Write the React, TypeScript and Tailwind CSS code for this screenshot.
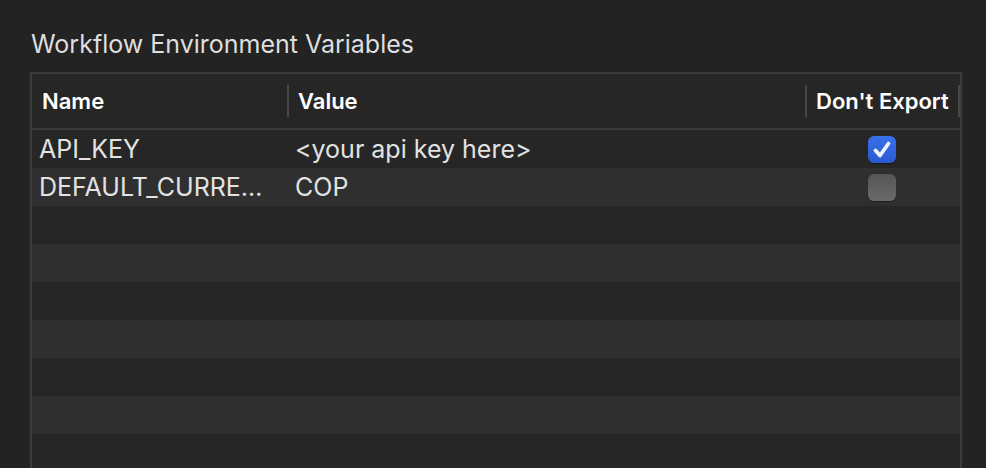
type EnvVar = { name: string; value: string; noExport: boolean };

const vars: EnvVar[] = [
  { name: 'API_KEY', value: '<your api key here>', noExport: true },
  { name: 'DEFAULT_CURRE…', value: 'COP', noExport: false },
];

const FONT = "font-['Inter','Liberation_Sans',sans-serif]";

function Checkbox({ checked }: { checked: boolean }) {
  if (checked) {
    return (
      <div className="w-[28px] h-[27px] rounded-[6px] bg-gradient-to-b from-[#3870ea] to-[#2b5ad0] flex items-center justify-center shadow-[0_1px_1px_rgba(0,0,0,0.4)]">
        <svg width="28" height="27" viewBox="0 0 28 27" fill="none">
          <path d="M7.5 14.5 L12 19.5 L20.5 7.5" stroke="#eef2fd" strokeWidth="3.8" strokeLinecap="round" strokeLinejoin="round" />
        </svg>
      </div>
    );
  }
  return (
    <div className="w-[28px] h-[27px] rounded-[6px] bg-gradient-to-b from-[#565656] to-[#6a6a6a] shadow-[0_1px_1px_rgba(0,0,0,0.4)]" />
  );
}

export default function App() {
  const rows = Array.from({ length: 9 }).map((_, i) => vars[i] ?? null);

  return (
    <div className={`w-[986px] h-[468px] bg-[#232323] overflow-hidden ${FONT}`}>
      <h1 className="pl-[31px] pt-[29px] h-[72px] text-[25px] leading-[31px] text-[#dedede]">
        Workflow Environment Variables
      </h1>

      <div className="ml-[30px] w-[932px] border-2 border-b-0 border-[#3b3b3b] bg-[#262626]">
        {/* Header */}
        <div className="flex h-[56px] items-center border-b-2 border-[#3b3b3b] text-[22px] font-semibold text-white">
          <div className="w-[255px] pl-[10px]">Name</div>
          <div className="w-[2px] h-[32px] bg-[#474747]" />
          <div className="w-[516px] pl-[9px]">Value</div>
          <div className="w-[2px] h-[32px] bg-[#474747]" />
          <div className="w-[151px] pl-[9px]">Don't Export</div>
          <div className="w-[2px] h-[32px] bg-[#474747]" />
        </div>

        {/* Rows */}
        {rows.map((row, i) => (
          <div
            key={i}
            className={`flex h-[38px] items-center text-[25px] text-[#e2e2e2] ${i % 2 === 1 ? 'bg-[#2f2f2f]' : 'bg-[#262626]'}`}
          >
            {row && (
              <>
                <div className="w-[257px] pl-[7px] pt-[2px] truncate">{row.name}</div>
                <div className="w-[518px] pl-[6px] pt-[2px] truncate">{row.value}</div>
                <div className="flex-1 flex justify-center pr-[4px]">
                  <Checkbox checked={row.noExport} />
                </div>
              </>
            )}
          </div>
        ))}
      </div>
    </div>
  );
}
